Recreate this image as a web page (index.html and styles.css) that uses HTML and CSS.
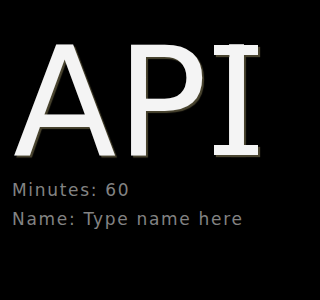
FILE: index.html
```html
<!DOCTYPE html>
<html>
<head>
<meta charset="utf-8">
<link rel="stylesheet" href="styles.css">
</head>
<body>
<div class="page">
  <h1 class="title">AP<span class="serif-i">I</span></h1>
  <div class="field">Minutes: 60</div>
  <div class="field">Name: Type name here</div>
</div>
</body>
</html>
```

FILE: styles.css
```css
html, body {
  margin: 0;
  padding: 0;
  background: #000;
  width: 300px;
  height: 300px;
  overflow: hidden;
}
.page {
  padding: 30px 12px 0 12px;
  font-family: "DejaVu Sans", Verdana, sans-serif;
}
.title {
  margin: 0 0 0 1px;
  font-size: 151px;
  font-weight: normal;
  line-height: 146px;
  color: #f4f4f4;
  text-shadow: 2px 2px 1px #4a4530;
  white-space: nowrap;
}
.serif-i {
  position: relative;
  margin-left: 7px;
}
.serif-i::before,
.serif-i::after {
  content: "";
  position: absolute;
  left: 0;
  width: 44px;
  height: 10px;
  background: #f4f4f4;
  box-shadow: 2px 2px 1px #4a4530;
}
.serif-i::before {
  top: 30px;
  clip-path: polygon(-3px -3px, 48px -3px, 48px 14px, 30px 14px, 30px 10px, 15px 10px, 15px 14px, -3px 14px);
}
.serif-i::after {
  top: 130px;
}
.field {
  font-size: 17px;
  line-height: 29px;
  letter-spacing: 1.7px;
  color: #838383;
}
```
